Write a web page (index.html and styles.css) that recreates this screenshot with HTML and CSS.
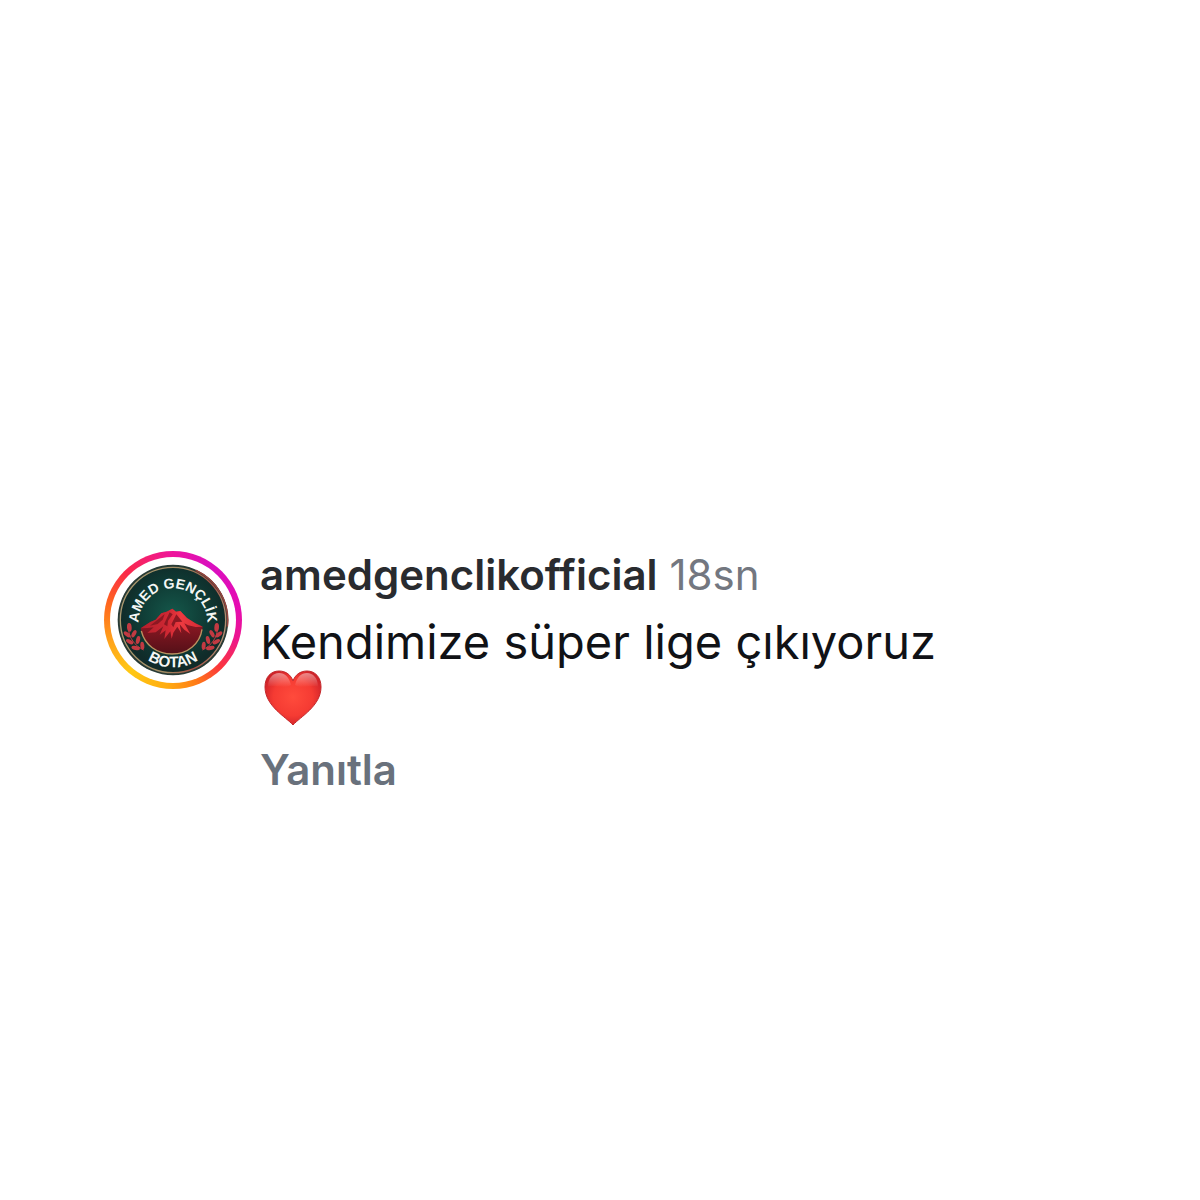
FILE: index.html
```
<!DOCTYPE html>
<html lang="tr">
<head>
    <meta charset="UTF-8">
    <meta name="viewport" content="width=device-width, initial-scale=1.0">
    <title>Yorum</title>
    <link rel="stylesheet" href="styles.css">
</head>
<body>
    <article class="comment">
        <a class="avatar" href="#" aria-label="amedgenclikofficial">
            <svg class="badge" viewBox="0 0 336 336" role="img" aria-label="Amed Gençlik Botan">
                <defs>
                    <radialGradient id="green" cx="50%" cy="45%" r="50%">
                        <stop offset="0" stop-color="#15584b"/>
                        <stop offset="0.65" stop-color="#0f3a34"/>
                        <stop offset="1" stop-color="#102b29"/>
                    </radialGradient>
                    <linearGradient id="rim" x1="0" y1="0.3" x2="1" y2="0.5">
                        <stop offset="0" stop-color="#ab9a70"/>
                        <stop offset="0.55" stop-color="#a08a62"/>
                        <stop offset="0.8" stop-color="#a34a40"/>
                        <stop offset="1" stop-color="#b08e72"/>
                    </linearGradient>
                    <linearGradient id="rock" x1="0" y1="0" x2="0" y2="1">
                        <stop offset="0" stop-color="#a81c28"/>
                        <stop offset="0.5" stop-color="#7d1620"/>
                        <stop offset="1" stop-color="#541018"/>
                    </linearGradient>
                    <linearGradient id="ridge" x1="0" y1="0" x2="1" y2="0">
                        <stop offset="0" stop-color="#b3202c"/>
                        <stop offset="0.45" stop-color="#cf2833"/>
                        <stop offset="0.65" stop-color="#ee3a40"/>
                        <stop offset="1" stop-color="#d22a35"/>
                    </linearGradient>
                    <path id="topArc" d="M66 190A103 103 0 1 1 270 190"/>
                    <path id="bottomArc" d="M26 168a142 142 0 0 0 284 0"/>
                    <g id="laurel" fill="#c23a42">
                        <path d="M34 192C36 222 52 244 80 258" fill="none" stroke="#c23a42" stroke-width="3"/>
                        <ellipse cx="37" cy="190" rx="7" ry="13" transform="rotate(-4 37 190)"/>
                        <ellipse cx="30" cy="211" rx="6" ry="12" transform="rotate(-48 30 211)"/>
                        <ellipse cx="51" cy="209" rx="6" ry="12" transform="rotate(28 51 209)"/>
                        <ellipse cx="38" cy="233" rx="6" ry="12" transform="rotate(-62 38 233)"/>
                        <ellipse cx="63" cy="228" rx="6" ry="12" transform="rotate(14 63 228)"/>
                        <ellipse cx="56" cy="252" rx="6" ry="13" transform="rotate(-76 56 252)"/>
                        <ellipse cx="76" cy="245" rx="6" ry="12" transform="rotate(-5 76 245)"/>
                    </g>
                </defs>
                <circle cx="168" cy="168" r="166" fill="#293b35"/>
                <circle cx="168" cy="168" r="158" fill="url(#green)" stroke="url(#rim)" stroke-width="4"/>
                <path d="M236 19A164 164 0 0 1 331 188" fill="none" stroke="#94443d" stroke-width="5"/>
                <path d="M71 193L100 174L116 167L133 148L149 143L166 134L177 143L190 141L210 162L235 178L257 188C254 238 216 270 165 270C115 270 78 239 71 193Z" fill="url(#rock)"/>
                <path d="M71 193L100 174L116 167L133 148L149 143L166 134L177 143L190 141L210 162L235 178L257 188L236 189L214 184L202 178L220 210L202 197L188 181L193 208L181 188L169 206L164 224L160 202L142 225L146 199L128 212L139 187L116 205L91 207L110 190L91 192Z" fill="url(#ridge)"/>
                <path d="M133 158L143 150L137 167L122 180L99 185ZM158 145L167 151L153 170L151 187L141 181ZM178 151L196 173L176 174L169 190L163 181Z" fill="#8c1822"/>
                <path d="M73 201C83 243 120 270 165 270C213 270 249 238 255 196" fill="none" stroke="#ba9361" stroke-width="4"/>
                <use href="#laurel"/>
                <use href="#laurel" transform="translate(336 0) scale(-1 1)"/>
                <text class="badge-text badge-name"><textPath href="#topArc" startOffset="50%">AMED GENÇLİK</textPath></text>
                <text class="badge-text"><textPath href="#bottomArc" startOffset="50%">BOTAN</textPath></text>
            </svg>
        </a>
        <div class="content">
            <header class="meta">
                <a class="username" href="#">amedgenclikofficial</a>
                <time class="time">18sn</time>
            </header>
            <p class="text">Kendimize süper lige çıkıyoruz<br>
                <svg class="heart" viewBox="0 0 60 56" role="img" aria-label="Kırmızı kalp">
                    <defs>
                        <radialGradient id="heartFill" cx="50%" cy="48%" r="58%">
                            <stop offset="0" stop-color="#ff4b3c"/>
                            <stop offset="0.6" stop-color="#f53b33"/>
                            <stop offset="1" stop-color="#cb2028"/>
                        </radialGradient>
                        <linearGradient id="shine" x1="0" y1="0" x2="0" y2="1">
                            <stop offset="0" stop-color="#fff" stop-opacity="0.45"/>
                            <stop offset="1" stop-color="#fff" stop-opacity="0"/>
                        </linearGradient>
                    </defs>
                    <path d="M30 55C23 47 2 36 2 17C2 7 8 1 16 1C23 1 28 5 30 11C32 5 37 1 44 1C52 1 58 7 58 17C58 36 37 47 30 55Z" fill="url(#heartFill)" stroke="#c4282b"/>
                    <path d="M5 17C5 8 10 3 16 3C22 3 26 7 28 15C20 20 12 14 5 17ZM55 17C55 8 50 3 44 3C38 3 34 7 32 15C40 20 48 14 55 17Z" fill="url(#shine)"/>
                </svg>
            </p>
            <button class="reply" type="button">Yanıtla</button>
        </div>
    </article>
</body>
</html>
```
FILE: styles.css
```
body {
    margin: 0;
    background-color: #fff;
    font-family: Inter, "Liberation Sans", sans-serif;
    font-variant-ligatures: none;
}
a {
    color: inherit;
    text-decoration: none;
}
.comment {
    display: flex;
    align-items: flex-start;
    gap: 18px;
    padding: 551px 104px 0;
}
.avatar {
    display: flex;
    flex: none;
    padding: 6px;
    border-radius: 50%;
    background: conic-gradient(#ee149c, #d90fc0 35deg, #e60cb0 80deg, #ec1590 105deg, #fb363c 135deg, #ff7c16 160deg, #ffac10 185deg, #ffc814 220deg, #ffa51b 250deg, #ff651e 285deg, #fa2a48 315deg, #ee149c);
}
.badge {
    width: 112px;
    height: 112px;
    padding: 7px;
    border-radius: 50%;
    background-color: #fff;
}
.badge-text {
    fill: #f5f7f5;
    font-family: "Liberation Sans", Arial, sans-serif;
    font-size: 46px;
    font-weight: bold;
    text-anchor: middle;
}
.badge-name {
    font-size: 42px;
}
.content {
    flex: 1;
}
.meta {
    display: flex;
    gap: 12px;
    font-size: 42px;
    line-height: 48px;
}
.username {
    color: #292b2f;
    font-weight: 600;
}
.time {
    color: #737780;
}
.text {
    margin: 15px 0 20px;
    color: #101216;
    font-size: 47px;
    line-height: 56px;
}
.heart {
    display: block;
    width: 60px;
    height: 56px;
    margin-left: 3px;
}
.reply {
    display: block;
    padding: 0;
    border: none;
    background: none;
    color: #69717c;
    font-family: inherit;
    font-size: 42px;
    font-weight: 600;
    line-height: 48px;
    cursor: pointer;
}
```
